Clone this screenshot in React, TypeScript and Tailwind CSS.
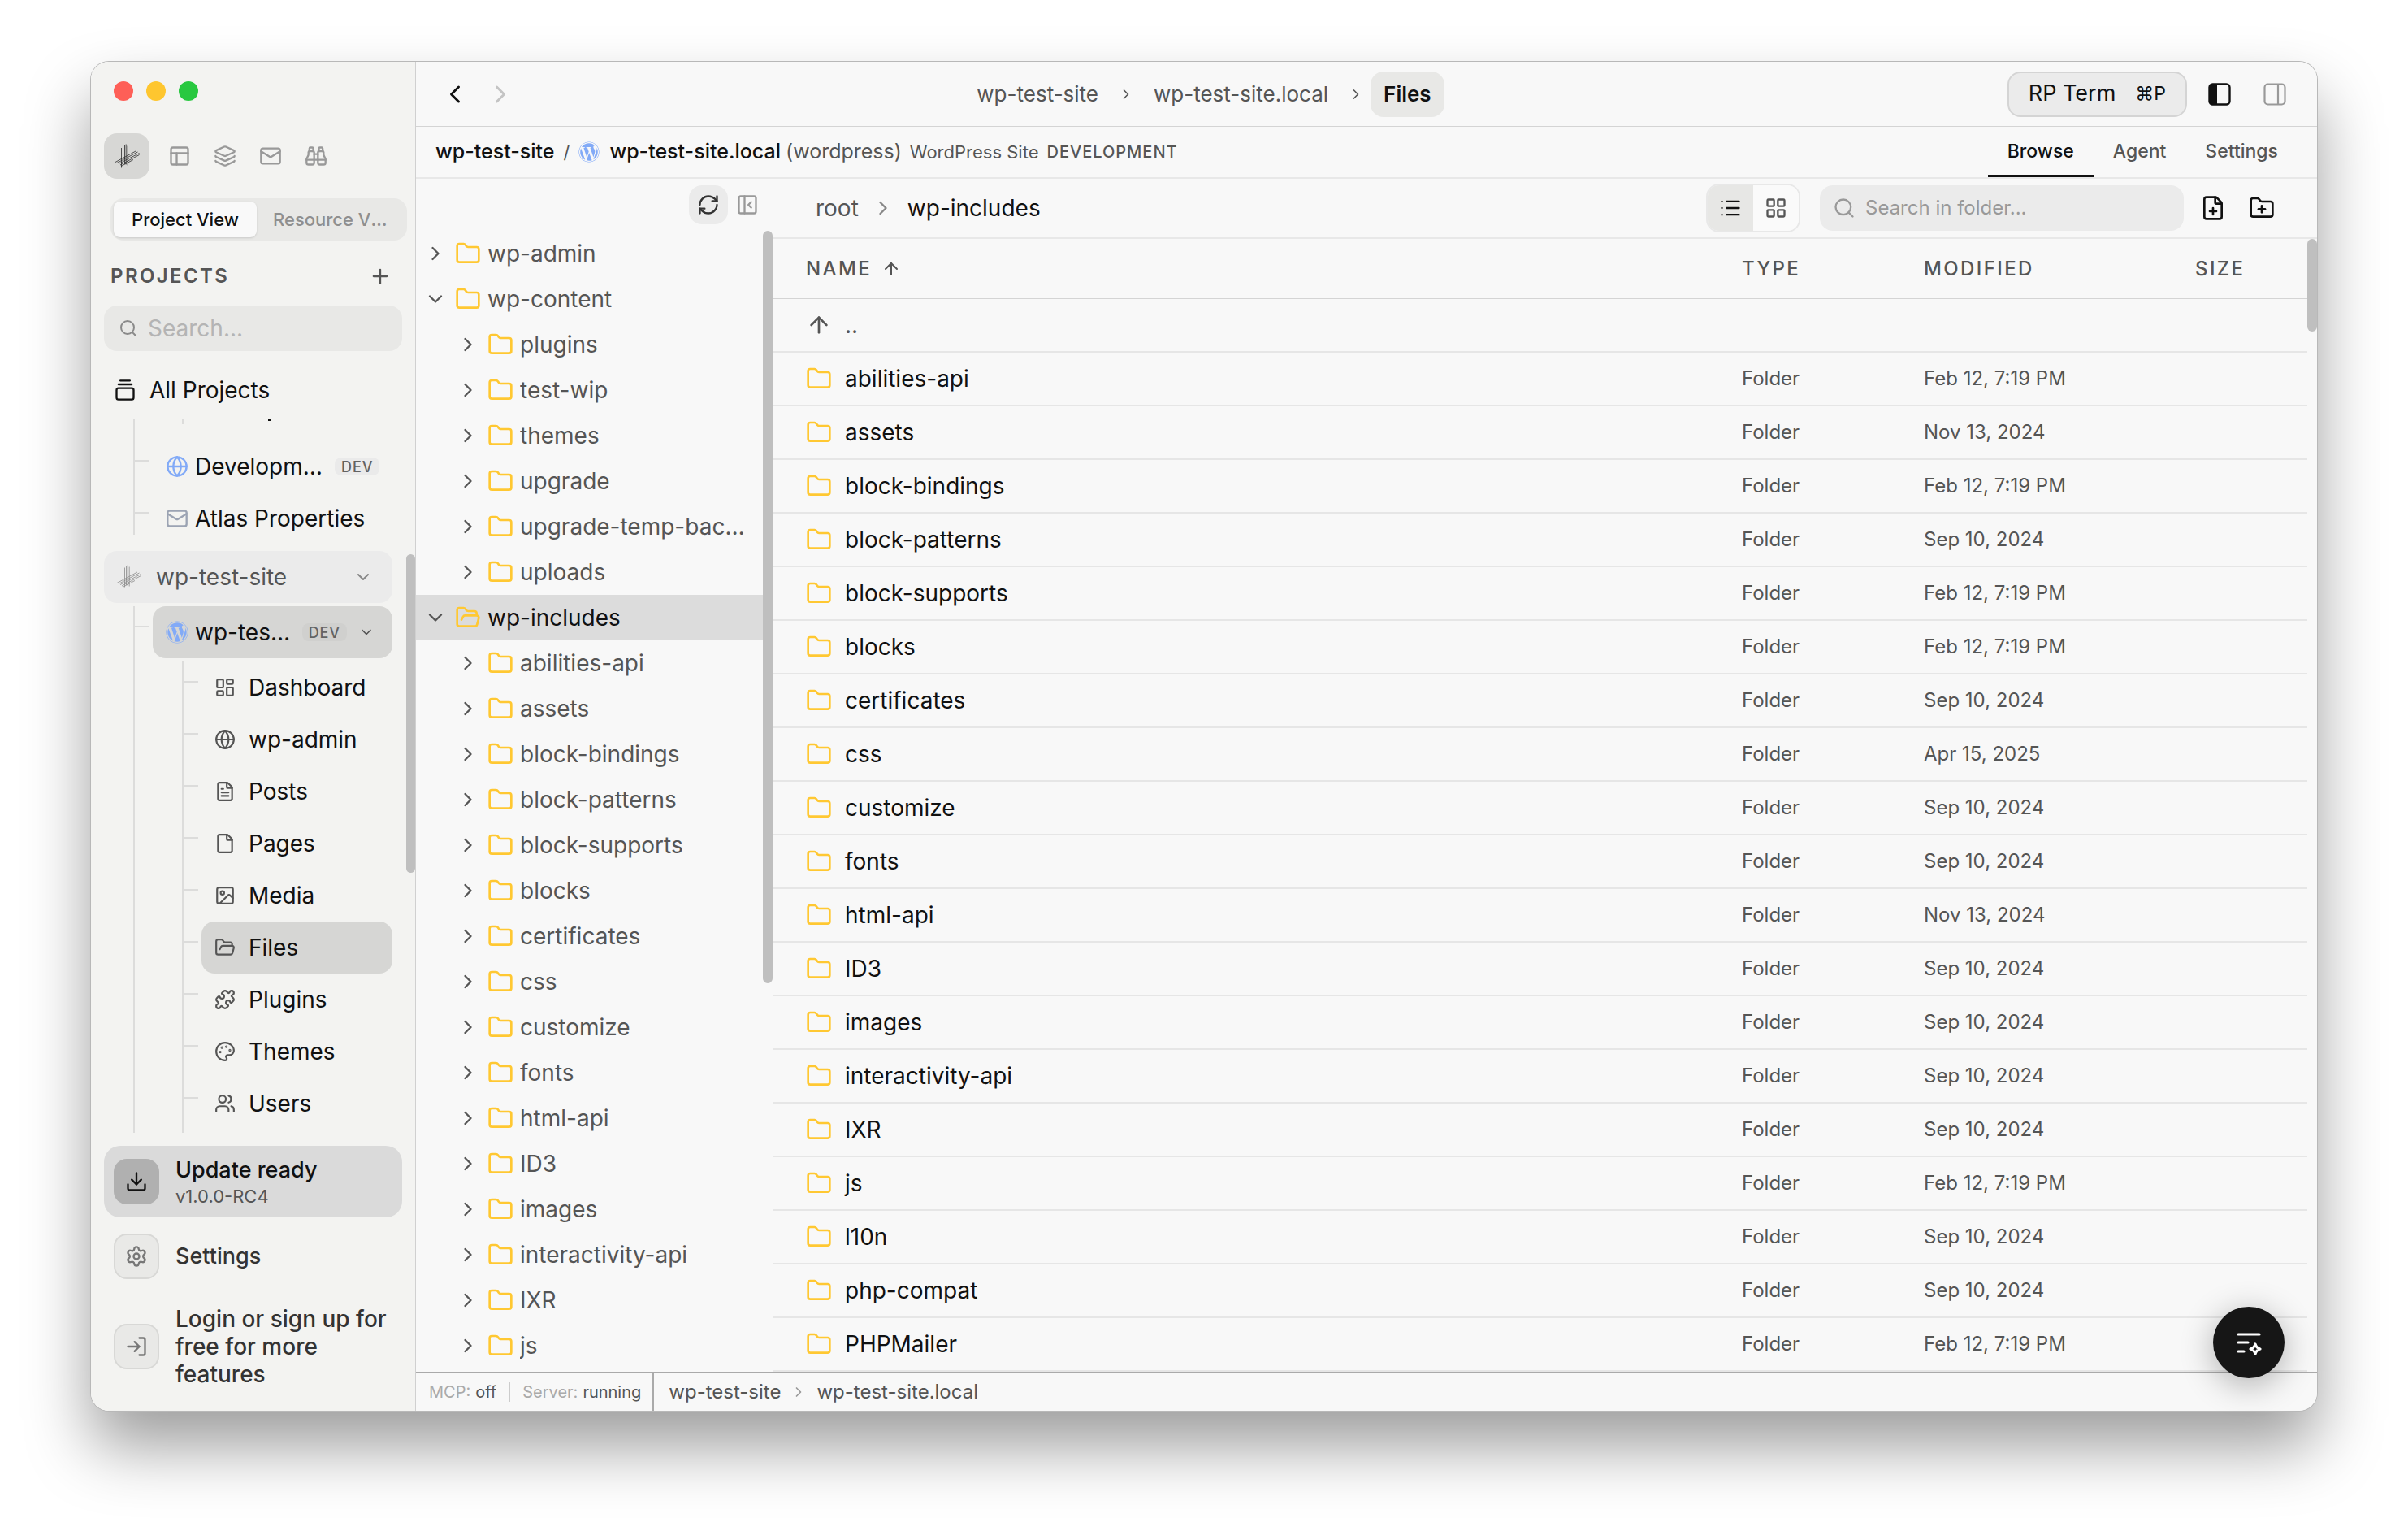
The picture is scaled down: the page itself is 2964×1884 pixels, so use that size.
import React from "react";
import {
    ArrowUp,
    Binoculars,
    ChevronDown,
    ChevronLeft,
    ChevronRight,
    Download,
    File,
    FilePlus,
    FileText,
    Folder,
    FolderOpen,
    FolderPlus,
    GalleryVerticalEnd,
    Globe,
    Image,
    Layers,
    LayoutDashboard,
    LayoutGrid,
    List,
    LogIn,
    LucideIcon,
    Mail,
    Palette,
    PanelLeftClose,
    PanelsTopLeft,
    Plus,
    Puzzle,
    RefreshCw,
    Search,
    Settings,
    Users,
} from "lucide-react";
import { FaWordpress } from "react-icons/fa";

interface TreeItem {
    name: string;
    level: number;
    open?: boolean;
    active?: boolean;
}

interface FileRow {
    name: string;
    modified: string;
}

interface SiteLink {
    label: string;
    icon: LucideIcon;
    active?: boolean;
}

const treeItems: TreeItem[] = [
    { name: "wp-admin", level: 0 },
    { name: "wp-content", level: 0, open: true },
    { name: "plugins", level: 1 },
    { name: "test-wip", level: 1 },
    { name: "themes", level: 1 },
    { name: "upgrade", level: 1 },
    { name: "upgrade-temp-backup", level: 1 },
    { name: "uploads", level: 1 },
    { name: "wp-includes", level: 0, open: true, active: true },
    { name: "abilities-api", level: 1 },
    { name: "assets", level: 1 },
    { name: "block-bindings", level: 1 },
    { name: "block-patterns", level: 1 },
    { name: "block-supports", level: 1 },
    { name: "blocks", level: 1 },
    { name: "certificates", level: 1 },
    { name: "css", level: 1 },
    { name: "customize", level: 1 },
    { name: "fonts", level: 1 },
    { name: "html-api", level: 1 },
    { name: "ID3", level: 1 },
    { name: "images", level: 1 },
    { name: "interactivity-api", level: 1 },
    { name: "IXR", level: 1 },
    { name: "js", level: 1 },
];

const files: FileRow[] = [
    { name: "abilities-api", modified: "Feb 12, 7:19 PM" },
    { name: "assets", modified: "Nov 13, 2024" },
    { name: "block-bindings", modified: "Feb 12, 7:19 PM" },
    { name: "block-patterns", modified: "Sep 10, 2024" },
    { name: "block-supports", modified: "Feb 12, 7:19 PM" },
    { name: "blocks", modified: "Feb 12, 7:19 PM" },
    { name: "certificates", modified: "Sep 10, 2024" },
    { name: "css", modified: "Apr 15, 2025" },
    { name: "customize", modified: "Sep 10, 2024" },
    { name: "fonts", modified: "Sep 10, 2024" },
    { name: "html-api", modified: "Nov 13, 2024" },
    { name: "ID3", modified: "Sep 10, 2024" },
    { name: "images", modified: "Sep 10, 2024" },
    { name: "interactivity-api", modified: "Sep 10, 2024" },
    { name: "IXR", modified: "Sep 10, 2024" },
    { name: "js", modified: "Feb 12, 7:19 PM" },
    { name: "l10n", modified: "Sep 10, 2024" },
    { name: "php-compat", modified: "Sep 10, 2024" },
    { name: "PHPMailer", modified: "Feb 12, 7:19 PM" },
];

const siteLinks: SiteLink[] = [
    { label: "Dashboard", icon: LayoutDashboard },
    { label: "wp-admin", icon: Globe },
    { label: "Posts", icon: FileText },
    { label: "Pages", icon: File },
    { label: "Media", icon: Image },
    { label: "Files", icon: FolderOpen, active: true },
    { label: "Plugins", icon: Puzzle },
    { label: "Themes", icon: Palette },
    { label: "Users", icon: Users },
];

const toolIcons = [
    { label: "Layouts", icon: PanelsTopLeft },
    { label: "Layers", icon: Layers },
    { label: "Mail", icon: Mail },
    { label: "Explore", icon: Binoculars },
];

const Logo: React.FC<{ className?: string }> = ({ className }) => (
    <svg viewBox="0 0 32 32" fill="none" stroke="currentColor" className={className} aria-hidden="true">
        <path strokeWidth="0.8" d="M9.500 6v24.500M11.500 4.500v24M13.500 2.500v23.500M15.200 1.500v25M17.200 3.500v24" />
        <path strokeWidth="0.8" d="M2 23.500L27 10M4 24.500L29.500 11M6 25.500L31.500 12.500M8 27L31.500 14.500M9 28.500L24 20.500" />
    </svg>
);

const SidebarPanelIcon: React.FC = () => (
    <svg viewBox="0 0 28 28" fill="none" className="size-7" aria-hidden="true">
        <rect x="1.500" y="1.500" width="25" height="25" rx="4" stroke="currentColor" strokeWidth="2.400" />
        <path d="M2 5a3 3 0 0 1 3-3h6v24H5a3 3 0 0 1-3-3z" fill="currentColor" />
    </svg>
);

const DetailPanelIcon: React.FC = () => (
    <svg viewBox="0 0 28 28" fill="none" stroke="currentColor" strokeWidth="2.200" className="size-7" aria-hidden="true">
        <rect x="1.500" y="1.500" width="25" height="25" rx="4" />
        <path d="M18 2v24" />
    </svg>
);

const AssistantIcon: React.FC = () => (
    <svg viewBox="0 0 36 36" fill="none" stroke="currentColor" strokeLinecap="round" className="size-9" aria-hidden="true">
        <path strokeWidth="3.200" d="M5 8h26M5 18h12M5 29h7" />
        <path
            strokeWidth="3.200"
            strokeLinejoin="round"
            d="M26 20c1 3.700 2.300 5 6 6-3.700 1-5 2.300-6 6-1-3.700-2.300-5-6-6 3.700-1 5-2.300 6-6z"
        />
    </svg>
);

const DevBadge: React.FC<{ className: string }> = ({ className }) => (
    <span className={`flex h-[22px] shrink-0 items-center rounded-lg px-2 text-[18px] font-medium tracking-wider text-[#636363] ${className}`}>
        DEV
    </span>
);

const Sidebar: React.FC = () => {
    return (
        <aside className="flex w-[400px] shrink-0 flex-col border-r border-[#d0d0d0] bg-[#f3f3f1]">
            <div className="flex gap-4 px-7 pt-6">
                <span className="size-6 rounded-full bg-[#fe5f57]" />
                <span className="size-6 rounded-full bg-[#fec62f]" />
                <span className="size-6 rounded-full bg-[#28c840]" />
            </div>

            <nav className="mt-10 flex px-4" aria-label="Workspace">
                <button className="mr-[9px] flex size-14 items-center justify-center rounded-2xl bg-[#d7d7d5] text-[#2b2b2b]" aria-label="Home">
                    <Logo className="size-8" />
                </button>
                {toolIcons.map(({ label, icon: Icon }) => (
                    <button key={label} className="flex size-14 items-center justify-center text-[#999]" aria-label={label}>
                        <Icon className="size-7" />
                    </button>
                ))}
            </nav>

            <div className="mt-6 mr-2.5 ml-6 flex h-[52px] rounded-2xl bg-[#e8e8e6] p-1 text-[22px] font-medium">
                <button className="w-44 shrink-0 rounded-lg bg-[#f9f9f9] text-[#111] shadow-sm">Project View</button>
                <button className="min-w-0 flex-1 truncate px-5 text-left text-[#8f8f8f]">Resource View</button>
            </div>

            <div className="mt-4 flex h-14 items-center justify-between pr-[29px] pl-6 text-[#555]">
                <h2 className="text-[24px] font-semibold tracking-widest">PROJECTS</h2>
                <button aria-label="Add project">
                    <Plus className="size-7" />
                </button>
            </div>

            <label className="mx-4 mt-2 flex h-14 shrink-0 items-center gap-3 rounded-2xl bg-[#e8e8e6] px-4 text-[#8a8a8a]">
                <Search className="ml-0.5 size-6 shrink-0" />
                <input
                    type="text"
                    aria-label="Search projects"
                    placeholder="Search..."
                    className="w-full min-w-0 bg-transparent text-[28px] outline-none placeholder:text-[#b4b4b4]"
                />
            </label>

            <a href="#all" className="mt-4 flex h-16 shrink-0 items-center gap-4 px-7 text-[28px] text-[#111]">
                <GalleryVerticalEnd className="size-7" />
                All Projects
            </a>

            <div className="mt-1 flex min-h-0 flex-1">
                <div className="flex min-w-0 flex-1 flex-col overflow-hidden pl-4 text-[28px] text-[#111]">
                    <div className="ml-9 h-[142px] shrink-0 border-l-2 border-[#dcdcdb]">
                        {/* tail of the row scrolled out above */}
                        <div className="flex h-[6px] items-start pl-[58px]">
                            <span className="h-full w-0.5 bg-[#dcdcdb]" />
                            <span className="ml-[104px] h-0.5 w-[3px] bg-[#111]" />
                        </div>
                        <div className="mt-5 flex h-16">
                            <span className="mt-6 h-0.5 w-[18px] bg-[#dcdcdb]" />
                            <a href="#development" className="ml-5 flex min-w-0 flex-1 items-center gap-2">
                                <Globe className="size-7 shrink-0 text-[#82aaf7]" />
                                <span className="w-[164px] shrink-0 truncate">Development</span>
                                <DevBadge className="bg-[#eaeaea]" />
                            </a>
                        </div>
                        <div className="flex h-16">
                            <span className="mt-6 h-0.5 w-[18px] bg-[#dcdcdb]" />
                            <a href="#atlas" className="ml-5 flex items-center gap-2 whitespace-nowrap">
                                <Mail className="size-7 shrink-0 text-[#9ba3b3]" />
                                Atlas Properties
                            </a>
                        </div>
                    </div>

                    <a
                        href="#wp-test-site"
                        className="mt-5 mr-[17px] flex h-16 shrink-0 items-center rounded-2xl bg-[#ebebeb] pr-6 pl-3.5 text-[#555]"
                    >
                        <Logo className="size-8 text-[#8a8a8a]" />
                        <span className="ml-[18px] flex-1">wp-test-site</span>
                        <ChevronDown className="size-6 text-[#888]" />
                    </a>

                    <div className="mt-1 ml-9 min-h-0 flex-1 border-l-2 border-[#dcdcdb]">
                        <div className="flex h-16">
                            <span className="mt-6 h-0.5 w-[18px] bg-[#dcdcdb]" />
                            <a
                                href="#wp-test-site.local"
                                className="mr-[17px] ml-1 flex min-w-0 flex-1 items-center gap-2 rounded-2xl bg-[#d6d6d4] pr-[22px] pl-4"
                            >
                                <FaWordpress className="size-7 shrink-0 text-[#82aaf7]" />
                                <span className="min-w-0 flex-1 truncate">wp-test-site.local</span>
                                <DevBadge className="bg-[#d0d0ce]" />
                                <ChevronDown className="ml-1.5 size-5 shrink-0 text-[#555]" />
                            </a>
                        </div>
                        <ul className="mt-1 ml-[58px] border-l-2 border-[#dcdcdb] pb-1">
                            {siteLinks.map(({ label, icon: Icon, active }) => (
                                <li key={label} className="flex h-16">
                                    <span className="mt-6 h-0.5 w-[18px] bg-[#dcdcdb]" />
                                    <a
                                        href={`#${label}`}
                                        className={`mr-[17px] ml-1 flex flex-1 items-center gap-4 rounded-2xl pl-4 ${active ? "bg-[#d6d6d4]" : ""}`}
                                    >
                                        <Icon className="size-[26px] text-[#555]" />
                                        {label}
                                    </a>
                                </li>
                            ))}
                        </ul>
                    </div>
                </div>
                <div className="w-[11px] shrink-0 pt-[166px]">
                    <div className="h-[392px] rounded-full bg-[#bfbfbf]" />
                </div>
            </div>

            <div className="mt-4 mb-7 flex shrink-0 flex-col px-4 text-[27px] font-medium text-[#333]">
                <button className="flex h-[88px] items-center gap-5 rounded-[20px] bg-[#dadada] px-3 text-left">
                    <span className="flex size-14 items-center justify-center rounded-2xl bg-[#b0b0b0] text-[#111]">
                        <Download className="size-7" />
                    </span>
                    <span className="flex flex-col">
                        <span className="leading-9 text-[#111]">Update ready</span>
                        <span className="text-[22px] leading-7 font-normal text-[#555]">v1.0.0-RC4</span>
                    </span>
                </button>
                <button className="mt-2 flex h-20 items-center gap-5 px-3 text-left">
                    <span className="flex size-14 items-center justify-center rounded-2xl border-2 border-[#d8d8d6] bg-[#e9e9e7] text-[#777]">
                        <Settings className="size-7" />
                    </span>
                    Settings
                </button>
                <button className="mt-5 flex items-center gap-5 pl-3 text-left">
                    <span className="flex size-14 shrink-0 items-center justify-center rounded-2xl border-2 border-[#d8d8d6] bg-[#e9e9e7] text-[#777]">
                        <LogIn className="size-7" />
                    </span>
                    <span className="text-[28px] leading-[34px]">Login or sign up for free for more features</span>
                </button>
            </div>
        </aside>
    );
};

const TitleBar: React.FC = () => {
    return (
        <header className="grid h-20 shrink-0 grid-cols-[minmax(0,1fr)_auto_minmax(0,1fr)_400px] items-center border-b border-[#d4d4d4]">
            <div className="flex items-center gap-5 pl-[30px]">
                <button aria-label="Back" className="text-[#111]">
                    <ChevronLeft className="size-9" />
                </button>
                <button aria-label="Forward" className="text-[#c4c4c4]">
                    <ChevronRight className="size-9" />
                </button>
            </div>
            <nav className="flex items-center text-[26px] text-[#555]" aria-label="Breadcrumb">
                <a href="#wp-test-site" className="px-4">wp-test-site</a>
                <ChevronRight className="mx-2 size-5" />
                <a href="#wp-test-site.local" className="px-4">wp-test-site.local</a>
                <ChevronRight className="mx-2 size-5" />
                <a href="#files" className="flex h-14 items-center rounded-2xl bg-[#e8e8e6] px-4 font-semibold text-[#111]">
                    Files
                </a>
            </nav>
            <div className="col-span-2 flex items-center justify-end pr-[38px]">
                <button className="flex h-14 items-center gap-6 rounded-2xl border-2 border-[#d4d4d4] bg-[#ebebeb] px-6 text-[27px] text-[#111]">
                    RP Term
                    <span className="text-[23px]">⌘P</span>
                </button>
                <button aria-label="Toggle sidebar" className="ml-[26px] text-[#111]">
                    <SidebarPanelIcon />
                </button>
                <button aria-label="Toggle details" className="ml-10 text-[#999]">
                    <DetailPanelIcon />
                </button>
            </div>
        </header>
    );
};

const SiteBar: React.FC = () => {
    return (
        <div className="flex h-16 shrink-0 items-center border-b-2 border-[#e8e8e8] px-6 text-[25px] text-[#555]">
            <span className="font-medium text-[#111]">wp-test-site</span>
            <span className="mx-[11px] text-[22px]">/</span>
            <FaWordpress className="size-[26px] text-[#82aaf7]" />
            <span className="ml-3 font-medium text-[#111]">wp-test-site.local</span>
            <span className="ml-1.5">(wordpress)</span>
            <span className="ml-2.5 text-[22px]">WordPress Site</span>
            <span className="ml-2.5 text-[20px] font-medium tracking-wider">DEVELOPMENT</span>
            <div className="ml-auto flex h-full text-[23px] font-medium">
                <button className="border-b-[3px] border-[#111] px-6 pt-0.5 text-[#111]">Browse</button>
                <button className="border-b-[3px] border-transparent px-6 pt-0.5">Agent</button>
                <button className="border-b-[3px] border-transparent px-6 pt-0.5">Settings</button>
            </div>
        </div>
    );
};

const FileTree: React.FC = () => {
    return (
        <section className="flex w-[440px] shrink-0 flex-col border-r border-[#d4d4d4]">
            <div className="flex h-16 shrink-0 items-center justify-end gap-2.5 pr-[17px]">
                <button aria-label="Refresh" className="flex size-12 items-center justify-center rounded-2xl bg-[#ebebeb] text-[#333]">
                    <RefreshCw className="size-7" />
                </button>
                <button aria-label="Collapse tree" className="text-[#999]">
                    <PanelLeftClose className="size-7" />
                </button>
            </div>
            <div className="flex min-h-0 flex-1">
                <ul className="min-w-0 flex-1 overflow-hidden text-[28px] text-[#555]">
                    {treeItems.map((item, index) => (
                        <li
                            key={index}
                            className={`flex h-14 items-center pr-4 ${item.level === 0 ? "pl-[10px]" : "pl-[50px]"} ${
                                item.active ? "bg-[#dcdcdc] text-[#111]" : ""
                            }`}
                        >
                            {item.open ? (
                                <ChevronDown className="size-7 shrink-0 text-[#555]" />
                            ) : (
                                <ChevronRight className="size-7 shrink-0 text-[#555]" />
                            )}
                            {item.active ? (
                                <FolderOpen className="ml-2.5 size-8 shrink-0 text-[#ffc832]" />
                            ) : (
                                <Folder className="ml-2.5 size-8 shrink-0 text-[#ffc832]" />
                            )}
                            <span className="ml-2 truncate">{item.name}</span>
                        </li>
                    ))}
                </ul>
                <div className="w-3 shrink-0">
                    <div className="h-[926px] rounded-full bg-[#bfbfbf]" />
                </div>
            </div>
        </section>
    );
};

const FolderToolbar: React.FC = () => {
    return (
        <div className="flex h-[74px] shrink-0 items-center border-b-2 border-[#e8e8e8] px-[52px] text-[28px] text-[#555]">
            <a href="#root">root</a>
            <ChevronRight className="mx-4 size-7 text-[#888]" />
            <a href="#wp-includes" className="text-[#111]">wp-includes</a>
            <div className="ml-auto flex h-[60px] w-[116px] overflow-hidden rounded-2xl border-2 border-[#e8e8e8]">
                <button aria-label="List view" className="flex flex-1 items-center justify-center bg-[#e7e7e5] text-[#111]">
                    <List className="size-7" />
                </button>
                <button aria-label="Grid view" className="flex flex-1 items-center justify-center bg-[#fafafa]">
                    <LayoutGrid className="size-7" />
                </button>
            </div>
            <label className="ml-6 flex h-14 w-[448px] items-center gap-3 rounded-2xl bg-[#ebebeb] px-4 text-[#999]">
                <Search className="size-7 shrink-0" />
                <input
                    type="text"
                    aria-label="Search in folder"
                    placeholder="Search in folder..."
                    className="w-full min-w-0 bg-transparent text-[24px] outline-none placeholder:text-[#999]"
                />
            </label>
            <button aria-label="New file" className="ml-5 text-[#111]">
                <FilePlus className="size-8" />
            </button>
            <button aria-label="New folder" className="ml-7 text-[#111]">
                <FolderPlus className="size-8" />
            </button>
        </div>
    );
};

const FileTable: React.FC = () => {
    return (
        <div className="flex min-h-0 flex-1">
            <div className="min-w-0 flex-1 overflow-hidden">
                <table className="w-full table-fixed border-separate border-spacing-0 text-left text-[24px] text-[#555]">
                    <thead>
                    <tr className="h-[74px] tracking-widest">
                        <th scope="col" className="border-b border-[#d4d4d4] pl-10 font-medium">
                            <span className="flex items-center gap-3">
                                NAME
                                <ArrowUp className="size-6" />
                            </span>
                        </th>
                        <th scope="col" className="w-56 border-b border-[#d4d4d4] pl-4 font-medium">TYPE</th>
                        <th scope="col" className="w-[334px] border-b border-[#d4d4d4] pl-4 font-medium">MODIFIED</th>
                        <th scope="col" className="w-[154px] border-b border-[#d4d4d4] pl-4 font-medium">SIZE</th>
                    </tr>
                    </thead>
                    <tbody>
                    <tr className="h-[66px]">
                        <td colSpan={4} className="border-b-2 border-[#e6e6e6] pl-10 text-[28px]">
                            <a href="#up" className="flex items-center gap-4">
                                <ArrowUp className="size-8" />
                                ..
                            </a>
                        </td>
                    </tr>
                    {files.map((file: FileRow) => (
                        <tr key={file.name} className="h-[66px]">
                            <td className="border-b-2 border-[#e6e6e6] pl-10 text-[28px] text-[#111]">
                                <span className="flex items-center gap-4">
                                    <Folder className="size-8 text-[#ffc832]" />
                                    {file.name}
                                </span>
                            </td>
                            <td className="border-b-2 border-[#e6e6e6] pl-4">Folder</td>
                            <td className="border-b-2 border-[#e6e6e6] pl-4">{file.modified}</td>
                            <td className="border-b-2 border-[#e6e6e6] pl-4" />
                        </tr>
                    ))}
                    </tbody>
                </table>
            </div>
            <div className="w-3 shrink-0">
                <div className="h-[114px] rounded-full bg-[#bfbfbf]" />
            </div>
        </div>
    );
};

const StatusBar: React.FC = () => {
    return (
        <footer className="flex h-12 shrink-0 items-center border-t-2 border-[#aaa] text-[#555]">
            <div className="flex h-full items-center border-r-2 border-[#aaa] pr-3.5 pl-4 text-[20px]">
                <span className="text-[#aaa]">MCP:</span>
                <span className="ml-1.5">off</span>
                <span className="mx-[15px] h-6 w-0.5 bg-[#ccc]" />
                <span className="text-[#aaa]">Server:</span>
                <span className="ml-1.5">running</span>
            </div>
            <nav className="flex items-center pl-[18px] text-[24px]" aria-label="Location">
                <a href="#wp-test-site">wp-test-site</a>
                <ChevronRight className="mx-3 size-5 text-[#999]" />
                <a href="#wp-test-site.local">wp-test-site.local</a>
            </nav>
        </footer>
    );
};

const App: React.FC = () => {
    return (
        <div className="flex h-screen bg-white px-28 pt-[76px] pb-[148px] font-[Inter,sans-serif]">
            <div className="relative flex min-w-0 flex-1 rounded-[22px] shadow-[0_0_0_1px_#b8b8b8,0_44px_80px_rgba(0,0,0,0.39)]">
                <div className="flex min-w-0 flex-1 overflow-hidden rounded-[22px] bg-[#f8f8f8]">
                    <Sidebar />
                    <main className="flex min-w-0 flex-1 flex-col">
                        <TitleBar />
                        <SiteBar />
                        <div className="flex min-h-0 flex-1">
                            <FileTree />
                            <section className="flex min-w-0 flex-1 flex-col">
                                <FolderToolbar />
                                <FileTable />
                            </section>
                        </div>
                        <StatusBar />
                    </main>
                </div>
                <button
                    aria-label="Open assistant"
                    className="absolute right-10 bottom-10 flex size-[88px] items-center justify-center rounded-full bg-[#161616] text-white shadow-[0_8px_40px_rgba(0,0,0,0.3)]"
                >
                    <AssistantIcon />
                </button>
            </div>
        </div>
    );
};

export default App;
